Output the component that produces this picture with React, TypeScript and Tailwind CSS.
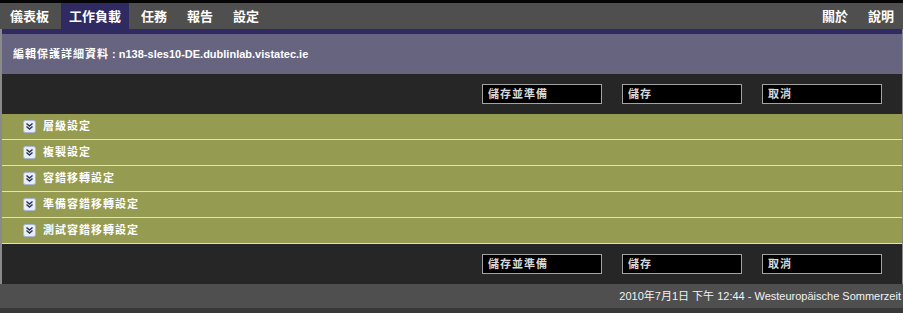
import React from "react";

const CJK = '"Liberation Sans", "Noto Sans CJK TC", sans-serif';

function Btn({ label }: { label: string }) {
  return (
    <div className="w-[120px] h-[20px] bg-black border border-[#a3a3a3] flex items-center pl-[5px] text-[11px] font-bold text-[#d9d9d9] leading-none tracking-[1px]">
      {label}
    </div>
  );
}

function ButtonBar() {
  return (
    <div className="h-[40px] bg-[#262626] flex items-center justify-end gap-5 pr-5">
      <Btn label="儲存並準備" />
      <Btn label="儲存" />
      <Btn label="取消" />
    </div>
  );
}

function ExpandIcon() {
  return (
    <svg width="13" height="13" viewBox="0 0 13 13">
      <rect x="0.5" y="0.5" width="12" height="12" rx="2" fill="#e8eef9" stroke="#a9b7d3" />
      <path d="M3.5 3.5 L6.5 6 L9.5 3.5" fill="none" stroke="#2e3454" strokeWidth="1.5" />
      <path d="M3.5 6.5 L6.5 9 L9.5 6.5" fill="none" stroke="#2e3454" strokeWidth="1.5" />
    </svg>
  );
}

const sections = ["層級設定", "複製設定", "容錯移轉設定", "準備容錯移轉設定", "測試容錯移轉設定"];

export default function App() {
  return (
    <div className="w-[903px] h-[313px] bg-[#383838] overflow-hidden" style={{ fontFamily: CJK }}>
      <div className="h-[3px] bg-[#050505]" />
      <nav className="h-[26px] bg-[#4f4f4f] flex justify-between pl-[2px] pr-[9px] text-[13px] font-bold text-white leading-none">
        <div className="flex gap-1 h-full">
          <div className="px-2 flex items-center">儀表板</div>
          <div className="px-2 flex items-center bg-[#2f2a62]">工作負載</div>
          <div className="px-2 flex items-center">任務</div>
          <div className="px-2 flex items-center">報告</div>
          <div className="px-2 flex items-center">設定</div>
        </div>
        <div className="flex gap-5 items-center">
          <span>關於</span>
          <span>說明</span>
        </div>
      </nav>
      <div className="border-l-2 border-r border-[#8a8a8a]">
        <div className="h-[5px] bg-[#2f2a62]" />
        <div className="h-[40px] bg-[#66647f] flex items-center pl-[11px] text-[11px] font-bold text-white leading-none whitespace-pre">
          <span className="tracking-[1px]">編輯保護詳細資料</span>
          <span> : n138-sles10-DE.dublinlab.vistatec.ie</span>
        </div>
        <ButtonBar />
        <div className="bg-[#959b50]">
          {sections.map((s) => (
            <div key={s} className="h-[26px] border-b border-[#dedede] flex items-center pl-[21px] gap-[7px] text-[11px] font-bold text-white leading-none">
              <ExpandIcon />
              <span className="tracking-[1px]">{s}</span>
            </div>
          ))}
        </div>
        <ButtonBar />
      </div>
      <footer className="h-[24px] bg-[#4f4f4f] flex items-center justify-end pr-[2px] text-[11px] text-[#f2f2f2] leading-none">
        2010年7月1日 下午 12:44 - Westeuropäische Sommerzeit
      </footer>
    </div>
  );
}
